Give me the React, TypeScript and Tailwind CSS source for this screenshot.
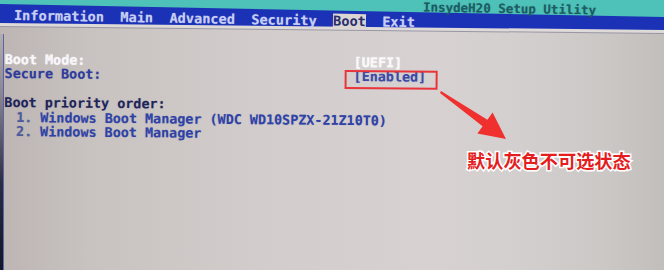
import React from "react";

const mono = { fontFamily: '"DejaVu Sans Mono", "Liberation Mono", monospace' };

export default function App() {
  return (
    <div
      className="relative w-[664px] h-[270px] overflow-hidden bg-[linear-gradient(to_right,#bcb5b3_0px,#c8c2c0_90px,#d2cdcc_260px,#d7d2d1_430px,#d3cfce_520px,#cbc8c6_600px,#c2bebc_664px)]"
      style={mono}
    >
      {/* header */}
      <div className="grid grid-cols-[664px] grid-rows-[34px] w-[664px] h-[34px]">
        <div className="col-start-1 row-start-1 w-[664px] h-[34px] bg-[#9896a4] [clip-path:polygon(0px_0px,664px_0px,664px_34px,0px_27px)]" />
        <div className="col-start-1 row-start-1 w-[664px] h-[34px] bg-[#dedad8] [clip-path:polygon(0px_0px,664px_0px,664px_33px,0px_26px)]" />
        <div className="col-start-1 row-start-1 w-[664px] h-[34px] bg-[#1b32b6] [clip-path:polygon(0px_0px,664px_0px,664px_30px,0px_23px)]" />
        <div className="col-start-1 row-start-1 w-[664px] h-[34px] bg-[#4ec2b8] [clip-path:polygon(0px_0px,664px_0px,664px_17px,0px_4px)]" />
        <div className="col-start-1 row-start-1 flex items-start pl-[423px] pt-[3px]">
          <span className="block rotate-[1deg] text-[12.5px] leading-[12px] font-bold text-[#1d5c64] whitespace-pre [text-shadow:0_0_1px_rgba(29,92,100,0.5)]">
            InsydeH20 Setup Utility
          </span>
        </div>
        <div className="col-start-1 row-start-1 pt-[8px] pl-[14px]">
          <div className="flex origin-left rotate-[1deg] text-[13.6px] leading-[15px] font-bold text-[#c7cef4] whitespace-pre [text-shadow:0_0_1px_rgba(199,206,244,0.5)]">
            <span>Information  Main  Advanced  Security  </span>
            <span className="bg-[#dcd6d2] text-[#2a2e6a]">Boot</span>
            <span>  Exit</span>
          </div>
        </div>
      </div>

      {/* body */}
      <div className="flex h-[236px]">
        <div className="w-[3px] shrink-0 bg-[linear-gradient(to_bottom,#b3adac_0px,#8a8690_60px,#2a2d40_150px,#121626_236px)]" />
        <div className="w-[1px] shrink-0 bg-[#5a64a8]" />
        <div className="flex-1 origin-top-left rotate-[0.5deg] pt-[19px] pl-[1px] text-[13.4px] leading-[14.4px] font-bold whitespace-pre [text-shadow:0_0_1px_rgba(40,50,120,0.35)]">
          <div className="flex h-[14.4px] [text-shadow:0_0_1px_rgba(255,255,255,0.9)]">
            <span className="w-[343px] text-[#f6f6fa]">Boot Mode:</span>
            <span className="pl-[6px] text-[#f8f8fb]">[UEFI]</span>
          </div>
          <div className="flex h-[14.4px]">
            <span className="w-[343px] text-[#2e3c9e]">Secure Boot:</span>
            <span className="relative">
              <span className="absolute left-[-3px] top-[0px] w-[93px] h-[19px] border-2 border-[#e8343a]" />
              <span className="pl-[6px] text-[#3c4aaa]">[Enabled]</span>
            </span>
          </div>
          <div className="h-[14.4px]" />
          <div className="h-[14.4px] text-[#1f2458]">Boot priority order:</div>
          <div className="flex h-[14.4px] pl-[12px]">
            <span className="w-[24px] text-[#4d5a9e]">1.</span>
            <span className="text-[#2f42a8]">Windows Boot Manager (WDC WD10SPZX-21Z10T0)</span>
          </div>
          <div className="flex h-[14.4px] pl-[12px]">
            <span className="w-[24px] text-[#4d5a9e]">2.</span>
            <span className="text-[#2f42a8]">Windows Boot Manager</span>
          </div>
        </div>
      </div>

      {/* annotation arrow */}
      <svg
        className="absolute left-0 top-0 pointer-events-none"
        width="664"
        height="270"
        viewBox="0 0 664 270"
      >
        <polygon
          points="441,91 487.4,119.8 492.6,112.5 506,139 477.4,133.5 482.6,126.2 440,93"
          fill="#f0302e"
        />
      </svg>

      {/* annotation label */}
      <div
        className="absolute left-[467px] top-[149px] text-[18.2px] leading-[22px] font-bold text-[#e41e1e] [-webkit-text-stroke:3px_#ffffff] [paint-order:stroke_fill] whitespace-nowrap"
        style={{ fontFamily: '"Noto Sans CJK SC", "Noto Sans", sans-serif' }}
      >
        默认灰色不可选状态
      </div>
    </div>
  );
}
